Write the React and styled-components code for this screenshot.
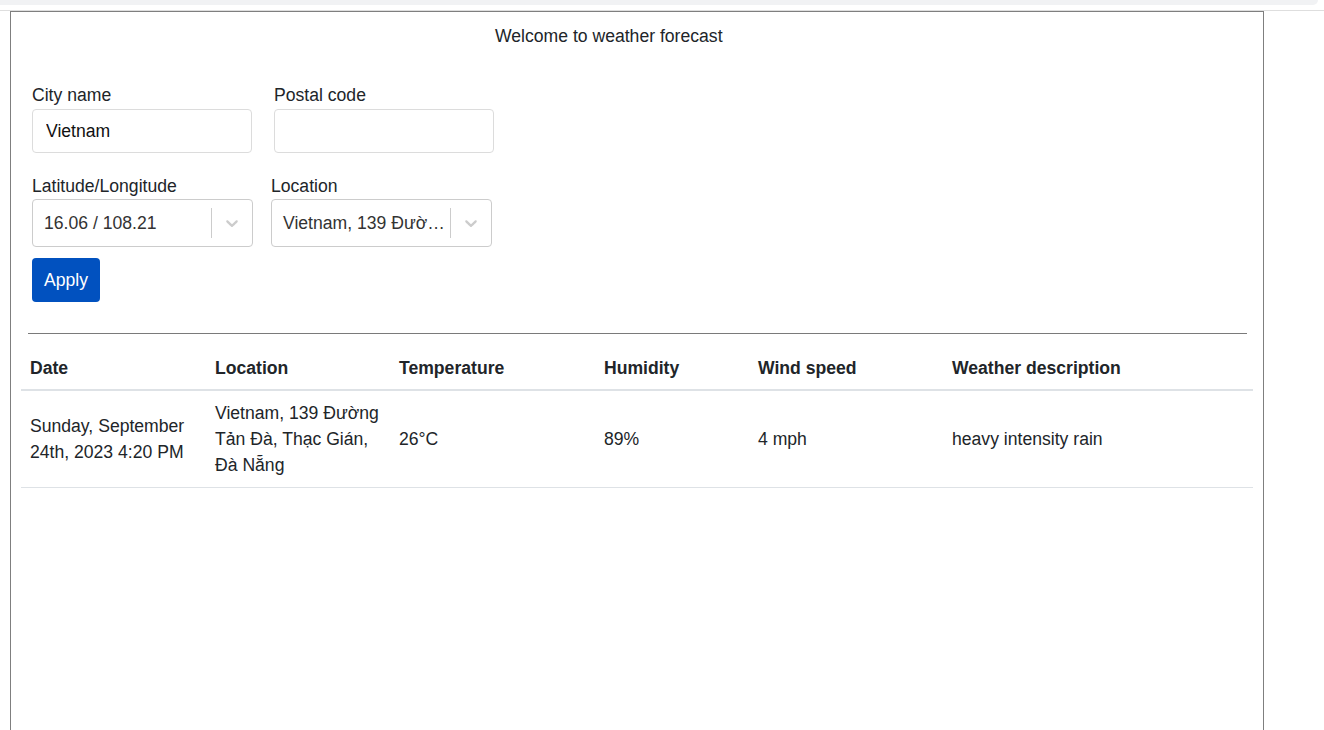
import React from 'react';
import styled, { createGlobalStyle } from 'styled-components';

const GlobalStyle = createGlobalStyle`
  html, body {
    margin: 0;
    padding: 0;
    background: #fff;
    font-family: "Liberation Sans", Arial, sans-serif;
    color: #212529;
  }
  * { box-sizing: border-box; }
`;

const TopBar = styled.div`
  height: 5px;
  width: calc(100% - 6px);
  background: #f1f2f4;
  border-bottom-right-radius: 6px;
`;

const Rule = styled.div`
  height: 1px;
  margin-top: 5px;
  background: #dedede;
`;

const Frame = styled.div`
  margin-left: 10px;
  width: 1254px;
  min-height: 719px;
  border: 1px solid #7f7f7f;
  border-bottom: none;
  padding: 0 10px 0 10px;
`;

const Title = styled.div`
  font-size: 17.6px;
  line-height: 20px;
  padding: 14px 0 0 474px;
  height: 73px;
`;

const Form = styled.div`
  padding-left: 11px;
  display: flex;
  flex-direction: column;
`;

const Row = styled.div`
  display: flex;
  gap: ${({ gap }) => gap}px;
  margin-bottom: ${({ mb }) => mb}px;
`;

const Field = styled.div`
  display: flex;
  flex-direction: column;
`;

const Label = styled.label`
  font-size: 17.6px;
  line-height: 20px;
  margin-bottom: ${({ mb = 3 }) => mb}px;
`;

const Input = styled.input`
  width: 220px;
  height: 44px;
  padding: 0 13px;
  font-family: inherit;
  font-size: 17.6px;
  color: #111;
  border: 1px solid #dcdcdc;
  border-radius: 4px;
  outline: none;
`;

const Select = styled.div`
  width: 221px;
  height: 48px;
  border: 1px solid #cccccc;
  border-radius: 4px;
  display: flex;
  align-items: center;
  background: #fff;
`;

const SelectValue = styled.div`
  flex: 1;
  min-width: 0;
  padding: 0 2px 0 11px;
  font-size: 17.6px;
  color: #333;
  white-space: nowrap;
  overflow: hidden;
  text-overflow: ellipsis;
`;

const Separator = styled.span`
  width: 1px;
  align-self: stretch;
  margin: 8px 0;
  background: #cccccc;
`;

const Indicator = styled.div`
  width: 40px;
  display: flex;
  justify-content: center;
  align-items: center;
  color: #cccccc;
`;

const ApplyButton = styled.button`
  width: 68px;
  height: 44px;
  background: #0151bf;
  color: #fff;
  border: none;
  border-radius: 4px;
  font-family: inherit;
  font-size: 17.6px;
  cursor: pointer;
`;

const Divider = styled.hr`
  margin: 31px 6px 0 7px;
  border: none;
  border-top: 1px solid #7a7a7a;
`;

const Table = styled.table`
  width: 1232px;
  border-collapse: collapse;
  font-size: 17.6px;
  margin-top: 12px;
`;

const Th = styled.th`
  text-align: left;
  font-weight: bold;
  padding: 12px 9px 11px;
  line-height: 20px;
  border-bottom: 2px solid #dee2e6;
  width: ${({ w }) => w}px;
`;

const Td = styled.td`
  padding: 9px;
  line-height: 26px;
  vertical-align: middle;
  border-bottom: 1px solid #dee2e6;
`;

const Chevron = () => (
  <svg width="20" height="20" viewBox="0 0 20 20" fill="currentColor">
    <path d="M4.516 7.548c0.436-0.446 1.043-0.481 1.576 0l3.908 3.747 3.908-3.747c0.533-0.481 1.141-0.446 1.574 0 0.436 0.445 0.408 1.197 0 1.615-0.406 0.418-4.695 4.502-4.695 4.502-0.217 0.223-0.502 0.335-0.787 0.335s-0.57-0.112-0.789-0.335c0 0-4.287-4.084-4.695-4.502s-0.436-1.170 0-1.615z" />
  </svg>
);

const columns = [
  { label: 'Date', w: 185 },
  { label: 'Location', w: 184 },
  { label: 'Temperature', w: 205 },
  { label: 'Humidity', w: 154 },
  { label: 'Wind speed', w: 194 },
  { label: 'Weather description', w: 310 },
];

const rows = [
  {
    date: <>Sunday, September<br />24th, 2023 4:20 PM</>,
    location: <>Vietnam, 139 Đường<br />Tản Đà, Thạc Gián,<br />Đà Nẵng</>,
    temp: '26°C',
    humidity: '89%',
    wind: '4 mph',
    desc: 'heavy intensity rain',
  },
];

export default function App() {
  return (
    <>
      <GlobalStyle />
      <TopBar />
      <Rule />
      <Frame>
        <Title>Welcome to weather forecast</Title>
        <Form>
          <Row gap={22} mb={23}>
            <Field>
              <Label mb={4}>City name</Label>
              <Input defaultValue="Vietnam" />
            </Field>
            <Field>
              <Label mb={4}>Postal code</Label>
              <Input defaultValue="" />
            </Field>
          </Row>
          <Row gap={18} mb={11}>
            <Field>
              <Label>Latitude/Longitude</Label>
              <Select>
                <SelectValue>16.06 / 108.21</SelectValue>
                <Separator />
                <Indicator><Chevron /></Indicator>
              </Select>
            </Field>
            <Field>
              <Label>Location</Label>
              <Select>
                <SelectValue>Vietnam, 139 Đường Tản Đà, Thạc Gián, Đà Nẵng</SelectValue>
                <Separator />
                <Indicator><Chevron /></Indicator>
              </Select>
            </Field>
          </Row>
          <div>
            <ApplyButton type="button">Apply</ApplyButton>
          </div>
        </Form>
        <Divider />
        <Table>
          <thead>
            <tr>
              {columns.map(c => <Th key={c.label} w={c.w}>{c.label}</Th>)}
            </tr>
          </thead>
          <tbody>
            {rows.map((r, i) => (
              <tr key={i}>
                <Td>{r.date}</Td>
                <Td>{r.location}</Td>
                <Td>{r.temp}</Td>
                <Td>{r.humidity}</Td>
                <Td>{r.wind}</Td>
                <Td>{r.desc}</Td>
              </tr>
            ))}
          </tbody>
        </Table>
      </Frame>
    </>
  );
}
